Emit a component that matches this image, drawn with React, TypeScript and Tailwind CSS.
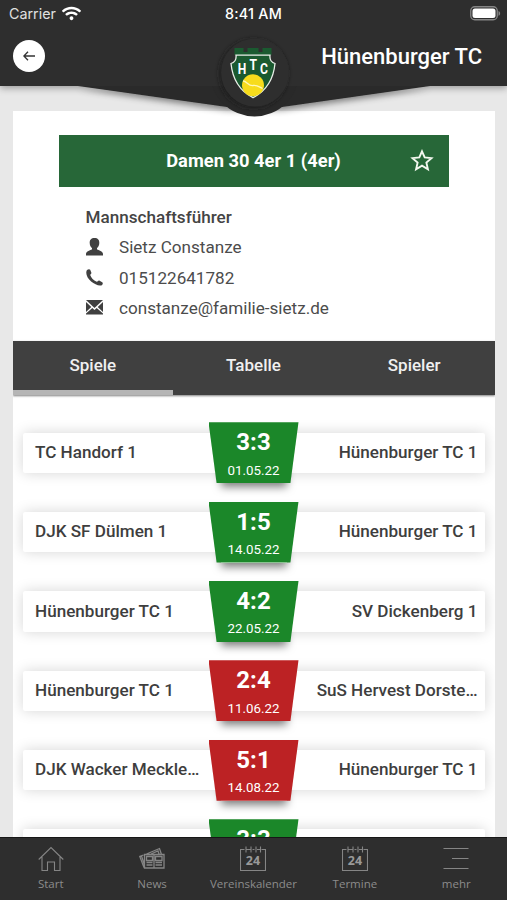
import { FaWifi } from "react-icons/fa";

type Match = {
  home: string;
  guest: string;
  score: string;
  date: string;
  lost?: boolean;
};

const matches: Match[] = [
  { home: "TC Handorf 1", guest: "Hünenburger TC 1", score: "3:3", date: "01.05.22" },
  { home: "DJK SF Dülmen 1", guest: "Hünenburger TC 1", score: "1:5", date: "14.05.22" },
  { home: "Hünenburger TC 1", guest: "SV Dickenberg 1", score: "4:2", date: "22.05.22" },
  { home: "Hünenburger TC 1", guest: "SuS Hervest Dorste…", score: "2:4", date: "11.06.22", lost: true },
  { home: "DJK Wacker Meckle…", guest: "Hünenburger TC 1", score: "5:1", date: "14.08.22", lost: true },
  { home: "", guest: "", score: "3:3", date: "" },
];

const tabs = ["Spiele", "Tabelle", "Spieler"];

const ClubLogo = () => (
  <svg width="46" height="51" viewBox="0 0 46 51">
    <path d="M4.500 0h9v4h4V0h11v4h4V0h9v7h-37z" fill="#1a5a30" />
    <path
      d="M6 7.200h34c-.5 4 1 7 5 8.300C43.500 31 36 43 23 49.700 10 43 2.500 31 1 15.500c4-1.300 5.500-4.300 5-8.300z"
      fill="#1a5a30"
      stroke="#e9efe9"
      strokeWidth="1.300"
    />
    <circle cx="23" cy="37.300" r="11" fill="#f7dc1c" />
    <path d="M13 33c4 0 5 5 10 4.500 5-.5 6 1.500 9.500 3" fill="none" stroke="#fff8b8" strokeWidth="1.300" />
    <g fill="#fff" fontFamily="Roboto, sans-serif" fontWeight="700" fontSize="15.500" textAnchor="middle">
      <text transform="translate(12 26) scale(.78 1)">H</text>
      <text transform="translate(23.300 21.800) scale(.78 1)">T</text>
      <text transform="translate(34 26) scale(.78 1)">C</text>
    </g>
  </svg>
);

const StatusBar = () => (
  <div className="grid h-7 grid-cols-3 items-center px-[9px] font-['Inter',sans-serif] text-[14.300px] text-[#e0e0e0]">
    <div className="flex items-center gap-1.5">
      <span>Carrier</span>
      <FaWifi size={19} className="-mt-px text-white" />
    </div>
    <span className="text-center font-medium tracking-[0.250px] text-white">8:41 AM</span>
    <svg className="-mr-[3px] -mt-[2px] justify-self-end" width="31" height="15" viewBox="0 0 31 15">
      <rect x=".75" y=".75" width="26.500" height="13" rx="4" fill="none" stroke="#858585" strokeWidth="1.300" />
      <rect x="2.500" y="2.500" width="23" height="9.500" rx="2.500" fill="#fff" />
      <path d="M28.500 5c2.200.8 2.200 4 0 4.800z" fill="#858585" />
    </svg>
  </div>
);

const Header = () => (
  <header className="relative z-10 h-[86px] shrink-0 bg-[#2e2e2e] shadow-[0_2px_7px_rgba(0,0,0,0.35)]">
    <svg className="absolute left-0 top-0" width="507" height="130" viewBox="0 0 507 130">
      <defs>
        <filter id="soft" x="-20%" y="-20%" width="140%" height="150%">
          <feGaussianBlur stdDeviation="2.500" />
        </filter>
        <filter id="wedge" x="-10%" y="-50%" width="120%" height="220%">
          <feDropShadow dx="0" dy="3" stdDeviation="3" floodOpacity=".45" />
        </filter>
      </defs>
      <path d="M78 86h352L282 107h-55z" fill="#2a2a2a" filter="url(#wedge)" />
      <path d="M0 0h507v86H0z" fill="#2e2e2e" />
      <circle cx="254.500" cy="72" r="44.500" fill="#292929" />
      <path d="M200 20h110v66H200z" fill="#2e2e2e" />
      <circle cx="253.500" cy="73.500" r="34" fill="#1f1f1f" filter="url(#soft)" />
      <circle cx="255" cy="72.500" r="34" fill="#2e2e2e" />
    </svg>
    <div className="relative">
      <StatusBar />
      <div className="flex items-center justify-between pl-[13px] pr-[25px]">
        <button className="mt-[10px] flex h-8 w-8 items-center justify-center rounded-full bg-white">
          <svg width="12" height="10" viewBox="0 0 12 10" fill="none" stroke="#333" strokeWidth="1.300">
            <path d="M5 .7.9 5 5 9.300M1 5h11" />
          </svg>
        </button>
        <h1 className="mt-[13px] text-[22px] font-medium leading-8 text-white">Hünenburger TC</h1>
      </div>
    </div>
    <div className="absolute left-[230px] top-[48px]">
      <ClubLogo />
    </div>
  </header>
);

const UserIcon = () => (
  <svg className="-mt-0.5" width="17" height="18" viewBox="0 0 17 18" fill="#404040">
    <path d="M8.500 0c3.300 0 5 2 4.800 5-.1 2.500-1 4-2.300 5v1.300c1.500 1.200 6 2 6 4.700v1.500H0V16c0-2.700 4.500-3.500 6-4.700V10C4.700 9 3.800 7.500 3.700 5 3.500 2 5.200 0 8.500 0z" />
  </svg>
);

const PhoneIcon = () => (
  <svg className="-mt-0.5" width="17" height="17" viewBox="0 0 17 17" fill="#404040">
    <path d="M.8 1.200C1.800.2 3.600-.2 4.200.8l1.200 3c.3.9-1 1.500-1.200 2.300.9 2.900 3.300 5.400 6.500 6.700.9-.1 1.600-1.700 2.500-1.300l3 1.700c1 .6.700 2.200-.3 3C10.500 18.500-2.500 9 .8 1.200z" />
  </svg>
);

const MailIcon = () => (
  <svg className="-mt-[3px]" width="17" height="15" viewBox="0 0 17 15" fill="#404040">
    <path d="M0 0h17L8.500 8zM0 2l5.300 5L0 12zM17 2l-5.300 5 5.300 5zM6.300 8l2.200 2 2.200-2L17 13.500v1H0v-1z" />
  </svg>
);

const TeamCard = () => (
  <section className="h-[230px] px-[46px] pt-[24.500px]">
    <div className="relative flex h-[51.500px] items-center justify-center bg-[#276738] text-[18.300px] font-bold tracking-[0.020px] text-white">
      <span>Damen 30 4er 1 (4er)</span>
      <svg className="absolute right-[15px] top-[14px]" width="24" height="23" viewBox="0 0 24 23">
        <path
          d="m12 2.300 2.700 6.100 6.800.7-5.100 4.500 1.500 6.600-5.900-3.500-5.900 3.500 1.500-6.600-5.100-4.500 6.800-.7z"
          fill="none"
          stroke="#f4f8ef"
          strokeWidth="1.900"
        />
      </svg>
    </div>
    <div className="pl-[27px] pt-[15px] text-[17.100px] text-[#4c4c4c]">
      <h2 className="h-[31.500px] leading-[30px] font-medium text-[#444]">Mannschaftsführer</h2>
      <div className="flex h-[30.500px] items-center gap-[16.500px]">
        <UserIcon />
        <span>Sietz Constanze</span>
      </div>
      <div className="flex h-[30.500px] items-center gap-[16.500px]">
        <PhoneIcon />
        <span>015122641782</span>
      </div>
      <div className="flex h-[30.500px] items-center gap-[16.500px]">
        <MailIcon />
        <span>constanze@familie-sietz.de</span>
      </div>
    </div>
  </section>
);

const MatchRow = ({ home, guest, score, date, lost }: Match) => (
  <div className="grid h-[40.400px] grid-cols-[1fr_90px_1fr] items-center rounded-[2px] bg-white text-[17.100px] font-medium text-[#3e3e3e] shadow-[0_0_14px_rgba(0,0,0,0.17)]">
    <span className="whitespace-nowrap pl-[12.500px]">{home}</span>
    <div className="relative -my-3 h-[61px]">
      <div className="absolute inset-x-[12px] bottom-0 h-4 shadow-[0_4px_8px_rgba(0,0,0,0.5)]" />
      <div
        className={`relative h-full text-center text-white [clip-path:polygon(0_0,100%_0,91%_100%,9%_100%)] ${
          lost ? "bg-[#bc2224]" : "bg-[#1b8729]"
        }`}
      >
        <div className="pt-[6px] text-[24px] font-bold leading-7">{score}</div>
        <div className="mt-[5.500px] text-[13.300px] font-normal leading-[18px]">{date}</div>
      </div>
    </div>
    <span className="whitespace-nowrap pr-[7px] text-right">{guest}</span>
  </div>
);

const HomeIcon = () => (
  <svg width="26" height="26" viewBox="0 0 26 26" fill="none" stroke="#858585" strokeWidth="1.100">
    <path d="M.7 13.500 13 1.500l12.300 12M4 11v13.500h5.500V16h7v8.500H22V11" />
  </svg>
);

const NewsIcon = () => (
  <svg width="26" height="26" viewBox="0 0 26 26" fill="none" stroke="#858585" strokeWidth="1.300">
    <path d="M5.500 8.500h19.500v13.500H5.500zM7.500 10.500h6v4h-6zM16.500 10.500h6.500v4h-6.500zM15 9v13M7.500 16.500h6M7.500 19h6M16.500 16.500H23M16.500 19H23M5 21.500.8 10.500 4.500 9M2.500 10l3 9M7.500 8 20.500 2.500l2 6M12 8l7-3 1 3" />
  </svg>
);

const CalendarIcon = () => (
  <svg width="26" height="26" viewBox="0 0 26 26" fill="none" stroke="#858585" strokeWidth="1.100">
    <path d="M4.500 3.500h-4v21h25v-21h-4M6.500 3.500h4M12.500 3.500h2M17 3.500h3M6 .5v6M11 .5v6M16 .5v6M20.500 .5v6" />
    <text x="13" y="19" textAnchor="middle" fontSize="12.500" fontWeight="700" fontFamily="Open Sans, sans-serif" fill="#999" stroke="none">
      24
    </text>
  </svg>
);

const MenuIcon = () => (
  <svg width="26" height="26" viewBox="0 0 26 26" stroke="#858585" strokeWidth="1.200">
    <path d="M.5 2.500h25M9 12.500h16.500M.5 22.500h25" />
  </svg>
);

const navItems = [
  { label: "Start", icon: HomeIcon },
  { label: "News", icon: NewsIcon },
  { label: "Vereinskalender", icon: CalendarIcon },
  { label: "Termine", icon: CalendarIcon },
  { label: "mehr", icon: MenuIcon },
];

const App = () => {
  return (
    <div className="flex h-[900px] w-[507px] flex-col overflow-hidden bg-[#e8e8e8] font-['Roboto',sans-serif]">
      <Header />

      <main className="mx-[12.500px] mt-[24.500px] flex-1 overflow-hidden bg-white">
        <TeamCard />

        <div className="relative grid h-[54.500px] grid-cols-3 bg-[#404040] text-[17px] font-medium text-[#f0f0f0] shadow-[0_1px_2px_rgba(0,0,0,0.5)]">
          {tabs.map((tab, i) => (
            <button key={tab} className={i === 0 ? "border-b-[5px] border-[#b5b5b5]" : "pb-[5px]"}>
              {tab}
            </button>
          ))}
        </div>

        <div className="flex flex-col gap-[39px] px-[10px] pt-[37.500px]">
          {matches.map((match, i) => (
            <MatchRow key={i} {...match} />
          ))}
        </div>
      </main>

      <nav className="relative grid h-[63.500px] shrink-0 grid-cols-5 border-t border-[#171717] bg-[#2e2e2e] pt-[8.500px] font-['Open_Sans',sans-serif] text-[11.500px] text-[#8c8c8c]">
        {navItems.map(({ label, icon: Icon }) => (
          <div key={label} className="flex flex-col items-center">
            <Icon />
            <span className="mt-[3px] leading-[18px]">{label}</span>
          </div>
        ))}
      </nav>
    </div>
  );
};

export default App;
